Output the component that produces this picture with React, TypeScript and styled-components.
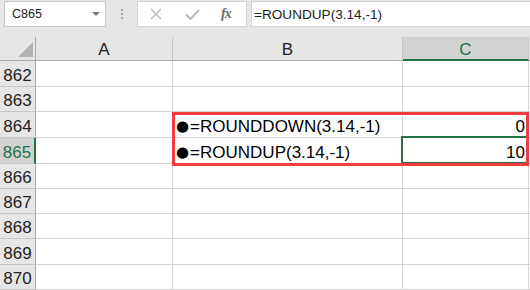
import { Fragment } from 'react';
import { createGlobalStyle, styled } from 'styled-components';

type Column = { key: string; width: number };
type Row = { num: number; height: number };
type CellData = { text: string; align: 'left' | 'right'; bullet?: boolean };

const columns: Column[] = [
	{ key: 'A', width: 137 },
	{ key: 'B', width: 230 },
	{ key: 'C', width: 126 },
];

const rows: Row[] = [
	{ num: 862, height: 26 },
	{ num: 863, height: 25 },
	{ num: 864, height: 26 },
	{ num: 865, height: 26 },
	{ num: 866, height: 25 },
	{ num: 867, height: 25 },
	{ num: 868, height: 25 },
	{ num: 869, height: 26 },
	{ num: 870, height: 25 },
];

const cells: Record<string, CellData> = {
	B864: { text: '=ROUNDDOWN(3.14,-1)', align: 'left', bullet: true },
	C864: { text: '0', align: 'right' },
	B865: { text: '=ROUNDUP(3.14,-1)', align: 'left', bullet: true },
	C865: { text: '10', align: 'right' },
};

const active = { col: 'C', row: 865 };

const GREEN = '#217346';

const GlobalStyle = createGlobalStyle`
	html, body {
		margin: 0;
		padding: 0;
		background: #ffffff;
		overflow: hidden;
	}
	body {
		font-family: "Liberation Sans", Arial, sans-serif;
	}
`;

const Layout = styled.div`
	width: 530px;
	height: 290px;
	overflow: hidden;
	background: #ffffff;
`;

const Toolbar = styled.div`
	height: 37px;
	box-sizing: border-box;
	padding: 1px 0 0 4px;
	display: flex;
	align-items: flex-start;
	background: #e6e6e6;
`;

const NameBox = styled.div`
	width: 102px;
	height: 26px;
	box-sizing: border-box;
	border: 1px solid #c6c6c6;
	background: #ffffff;
	display: flex;
	align-items: center;
	justify-content: space-between;
	padding: 0 5px 0 7px;
	font-size: 12.5px;
	color: #222;
`;

const Caret = styled.span`
	width: 0;
	height: 0;
	border-left: 4px solid transparent;
	border-right: 4px solid transparent;
	border-top: 4px solid #7a7a7a;
`;

const Grip = styled.div`
	width: 31px;
	height: 26px;
	display: flex;
	flex-direction: column;
	align-items: center;
	justify-content: center;
	gap: 2px;

	span {
		width: 2px;
		height: 2px;
		background: #a6a6a6;
	}
`;

const FuncBox = styled.div`
	width: 110px;
	height: 26px;
	box-sizing: border-box;
	border: 1px solid #d4d4d4;
	background: #ffffff;
	display: flex;
	align-items: center;
	padding-left: 12px;
	gap: 23px;
`;

const Fx = styled.span`
	font-family: "Liberation Serif", "Times New Roman", serif;
	font-style: italic;
	font-weight: bold;
	font-size: 14px;
	color: #6a6a6a;
	letter-spacing: -1px;
	margin-left: -2px;
`;

const FormulaInput = styled.div`
	flex: 1;
	margin-left: 4px;
	height: 26px;
	box-sizing: border-box;
	border: 1px solid #d4d4d4;
	border-right: none;
	background: #ffffff;
	display: flex;
	align-items: center;
	padding-left: 2px;
	font-size: 13.6px;
	color: #222;
`;

const Sheet = styled.div<{ $rows: string; $cols: string }>`
	display: grid;
	grid-template-columns: ${({ $cols }) => $cols};
	grid-template-rows: ${({ $rows }) => $rows};
	font-size: 17px;
	line-height: 17px;
	color: #000;
`;

const Corner = styled.div`
	grid-row: 1;
	grid-column: 1;
	background: #e6e6e6;
	box-sizing: border-box;
	border-right: 1px solid #a9a9a9;
	border-bottom: 1px solid #a9a9a9;
	display: flex;
	align-items: flex-end;
	justify-content: flex-end;
	padding: 0 2px 3px 0;
`;

const ColHeader = styled.div<{ $c: number; $active?: boolean }>`
	grid-row: 1;
	grid-column: ${({ $c }) => $c};
	box-sizing: border-box;
	background: ${({ $active }) => ($active ? '#d2d2d2' : '#e6e6e6')};
	color: ${({ $active }) => ($active ? GREEN : '#222')};
	border-right: 1px solid #c6c6c6;
	border-bottom: ${({ $active }) => ($active ? `2px solid ${GREEN}` : '1px solid #a9a9a9')};
	display: flex;
	align-items: flex-end;
	justify-content: center;
	padding-bottom: ${({ $active }) => ($active ? '1px' : '2px')};
`;

const RowHeader = styled.div<{ $r: number; $active?: boolean }>`
	grid-row: ${({ $r }) => $r};
	grid-column: 1;
	box-sizing: border-box;
	background: ${({ $active }) => ($active ? '#d2d2d2' : '#e6e6e6')};
	color: ${({ $active }) => ($active ? GREEN : '#222')};
	border-right: ${({ $active }) => ($active ? `2px solid ${GREEN}` : '1px solid #a9a9a9')};
	border-bottom: 1px solid #c6c6c6;
	display: flex;
	align-items: flex-end;
	justify-content: center;
	padding-bottom: 2px;
`;

const Cell = styled.div<{ $r: number; $c: number; $align: 'left' | 'right'; $active?: boolean }>`
	grid-row: ${({ $r }) => $r};
	grid-column: ${({ $c }) => $c};
	box-sizing: border-box;
	position: relative;
	border-right: 1px solid #d4d4d4;
	border-bottom: 1px solid #d4d4d4;
	display: flex;
	align-items: flex-end;
	justify-content: ${({ $align }) => ($align === 'right' ? 'flex-end' : 'flex-start')};
	padding: 0 3px 2px 3px;
	white-space: nowrap;

	${({ $active }) =>
		$active &&
		`
		&::after {
			content: '';
			position: absolute;
			top: -2px;
			left: -2px;
			right: -1px;
			bottom: -1px;
			border: 2px solid ${GREEN};
			z-index: 1;
		}
	`}
`;

const Bullet = styled.span`
	font-family: "DejaVu Sans", "Liberation Sans", sans-serif;
	font-size: 15px;
	line-height: 17px;
	margin-right: 1px;
	position: relative;
	top: 0;
`;

const Highlight = styled.div<{ $col: string; $row: string }>`
	grid-column: ${({ $col }) => $col};
	grid-row: ${({ $row }) => $row};
	margin: 0 0 -2px -1px;
	border: 3px solid #f43c3c;
	position: relative;
	z-index: 2;
	pointer-events: none;
`;

function App() {
	const colTemplate = `36px ${columns.map((c) => `${c.width}px`).join(' ')} 1fr`;
	const rowTemplate = `24px ${rows.map((r) => `${r.height}px`).join(' ')}`;
	const activeRef = `${active.col}${active.row}`;
	const formula = '=ROUNDUP(3.14,-1)';

	// 빨간 박스: B864:C865
	const boxTop = rows.findIndex((r) => r.num === 864) + 2;
	const boxLeft = columns.findIndex((c) => c.key === 'B') + 2;

	return (
		<Layout>
			<GlobalStyle />
			<Toolbar>
				<NameBox>
					<span>{activeRef}</span>
					<Caret />
				</NameBox>
				<Grip>
					<span />
					<span />
					<span />
				</Grip>
				<FuncBox>
					<svg width="12" height="12" viewBox="0 0 12 12">
						<path d="M1 1 L11 11 M11 1 L1 11" stroke="#b9b9b9" strokeWidth="1.4" fill="none" />
					</svg>
					<svg width="15" height="11" viewBox="0 0 15 11">
						<path d="M1 5.5 L5.5 10 L14 1" stroke="#b9b9b9" strokeWidth="2" fill="none" />
					</svg>
					<Fx>fx</Fx>
				</FuncBox>
				<FormulaInput>{formula}</FormulaInput>
			</Toolbar>
			<Sheet $cols={colTemplate} $rows={rowTemplate}>
				<Corner>
					<svg width="15" height="15" viewBox="0 0 15 15">
						<path d="M15 0 L15 15 L0 15 Z" fill="#b4b4b4" />
					</svg>
				</Corner>
				{columns.map((c, ci) => (
					<ColHeader key={c.key} $c={ci + 2} $active={c.key === active.col}>
						{c.key}
					</ColHeader>
				))}
				<ColHeader $c={columns.length + 2} />
				{rows.map((r, ri) => (
					<Fragment key={r.num}>
						<RowHeader $r={ri + 2} $active={r.num === active.row}>
							{r.num}
						</RowHeader>
						{columns.map((c, ci) => {
							const data = cells[`${c.key}${r.num}`];
							return (
								<Cell
									key={c.key}
									$r={ri + 2}
									$c={ci + 2}
									$align={data ? data.align : 'left'}
									$active={c.key === active.col && r.num === active.row}
								>
									{data?.bullet && <Bullet>●</Bullet>}
									{data ? data.text : ''}
								</Cell>
							);
						})}
						<Cell $r={ri + 2} $c={columns.length + 2} $align="left" />
					</Fragment>
				))}
				<Highlight $col={`${boxLeft} / ${boxLeft + 2}`} $row={`${boxTop} / ${boxTop + 2}`} />
			</Sheet>
		</Layout>
	);
}

export default App;
